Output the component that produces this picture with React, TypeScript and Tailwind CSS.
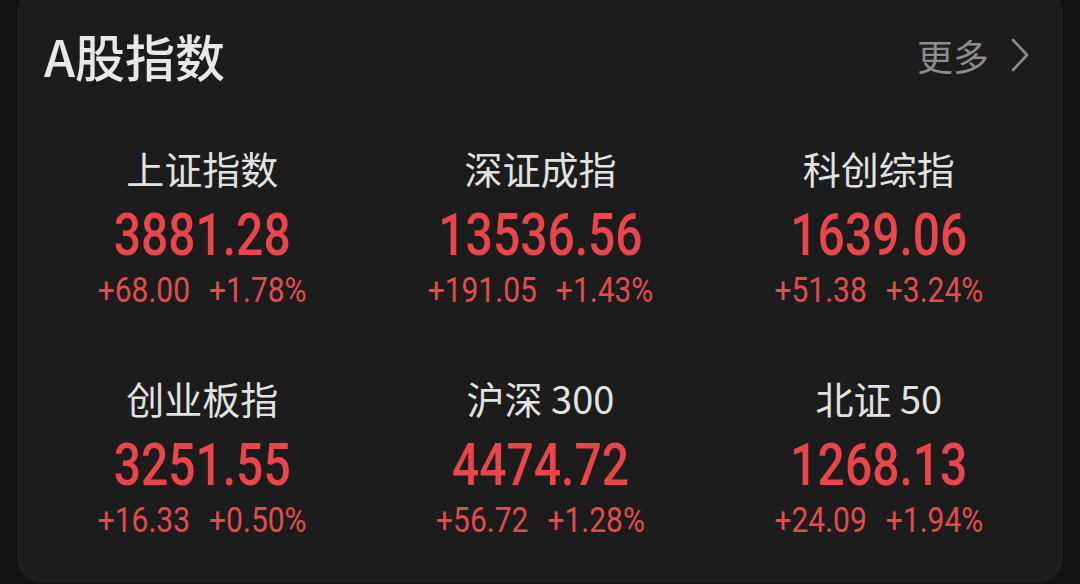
const indices = [
    { name: '上证指数', value: '3881.28', change: '+68.00', percent: '+1.78%' },
    { name: '深证成指', value: '13536.56', change: '+191.05', percent: '+1.43%' },
    { name: '科创综指', value: '1639.06', change: '+51.38', percent: '+3.24%' },
    { name: '创业板指', value: '3251.55', change: '+16.33', percent: '+0.50%' },
    { name: '沪深 300', value: '4474.72', change: '+56.72', percent: '+1.28%' },
    { name: '北证 50', value: '1268.13', change: '+24.09', percent: '+1.94%' },
];

const cjk = { fontFamily: '"Noto Sans CJK SC", "Noto Sans", sans-serif' };
const num = { fontFamily: 'Roboto, "Liberation Sans", sans-serif' };

export default function App() {
    return (
        <div className="h-[584px] w-[1080px] overflow-hidden bg-[#121212]">
            <div className="mx-[17px] -mt-[12px] h-[595px] rounded-[24px] bg-[#1c1c1c] pt-[42px]">
                {/* Header */}
                <div className="flex items-center justify-between pl-[27px] pr-[34px]">
                    <h2 className="text-[50px] leading-[50px] font-medium text-[#e8e8e8]" style={cjk}>
                        A股指数
                    </h2>
                    <div className="flex items-center gap-[22px] text-[#8c8c8c]">
                        <span className="text-[36px] leading-[44px]" style={cjk}>更多</span>
                        <svg width="18" height="34" viewBox="0 0 18 34" fill="none" stroke="currentColor" strokeWidth="2.6" strokeLinecap="round" strokeLinejoin="round">
                            <polyline points="2,2 16,17 2,32" />
                        </svg>
                    </div>
                </div>

                {/* Grid */}
                <div className="mt-[66px] grid grid-cols-3 gap-y-[66px] pl-[16px] pr-[15px]">
                    {indices.map((item) => (
                        <div key={item.name} className="flex flex-col items-center">
                            <div className="text-[38px] leading-[44px] text-[#e2e2e2]" style={cjk}>
                                {item.name}
                            </div>
                            <div className="mt-[15px] h-[60px] text-[48px] leading-[60px] font-medium text-[#ea454b]" style={num}>
                                <span className="inline-block scale-y-[1.24]">{item.value}</span>
                            </div>
                            <div className="mt-[5px] flex gap-[19px] text-[30px] leading-[40px] text-[#e24c50]" style={num}>
                                <span className="inline-block scale-y-[1.17]">{item.change}</span>
                                <span className="inline-block scale-y-[1.17]">{item.percent}</span>
                            </div>
                        </div>
                    ))}
                </div>
            </div>
        </div>
    );
}
